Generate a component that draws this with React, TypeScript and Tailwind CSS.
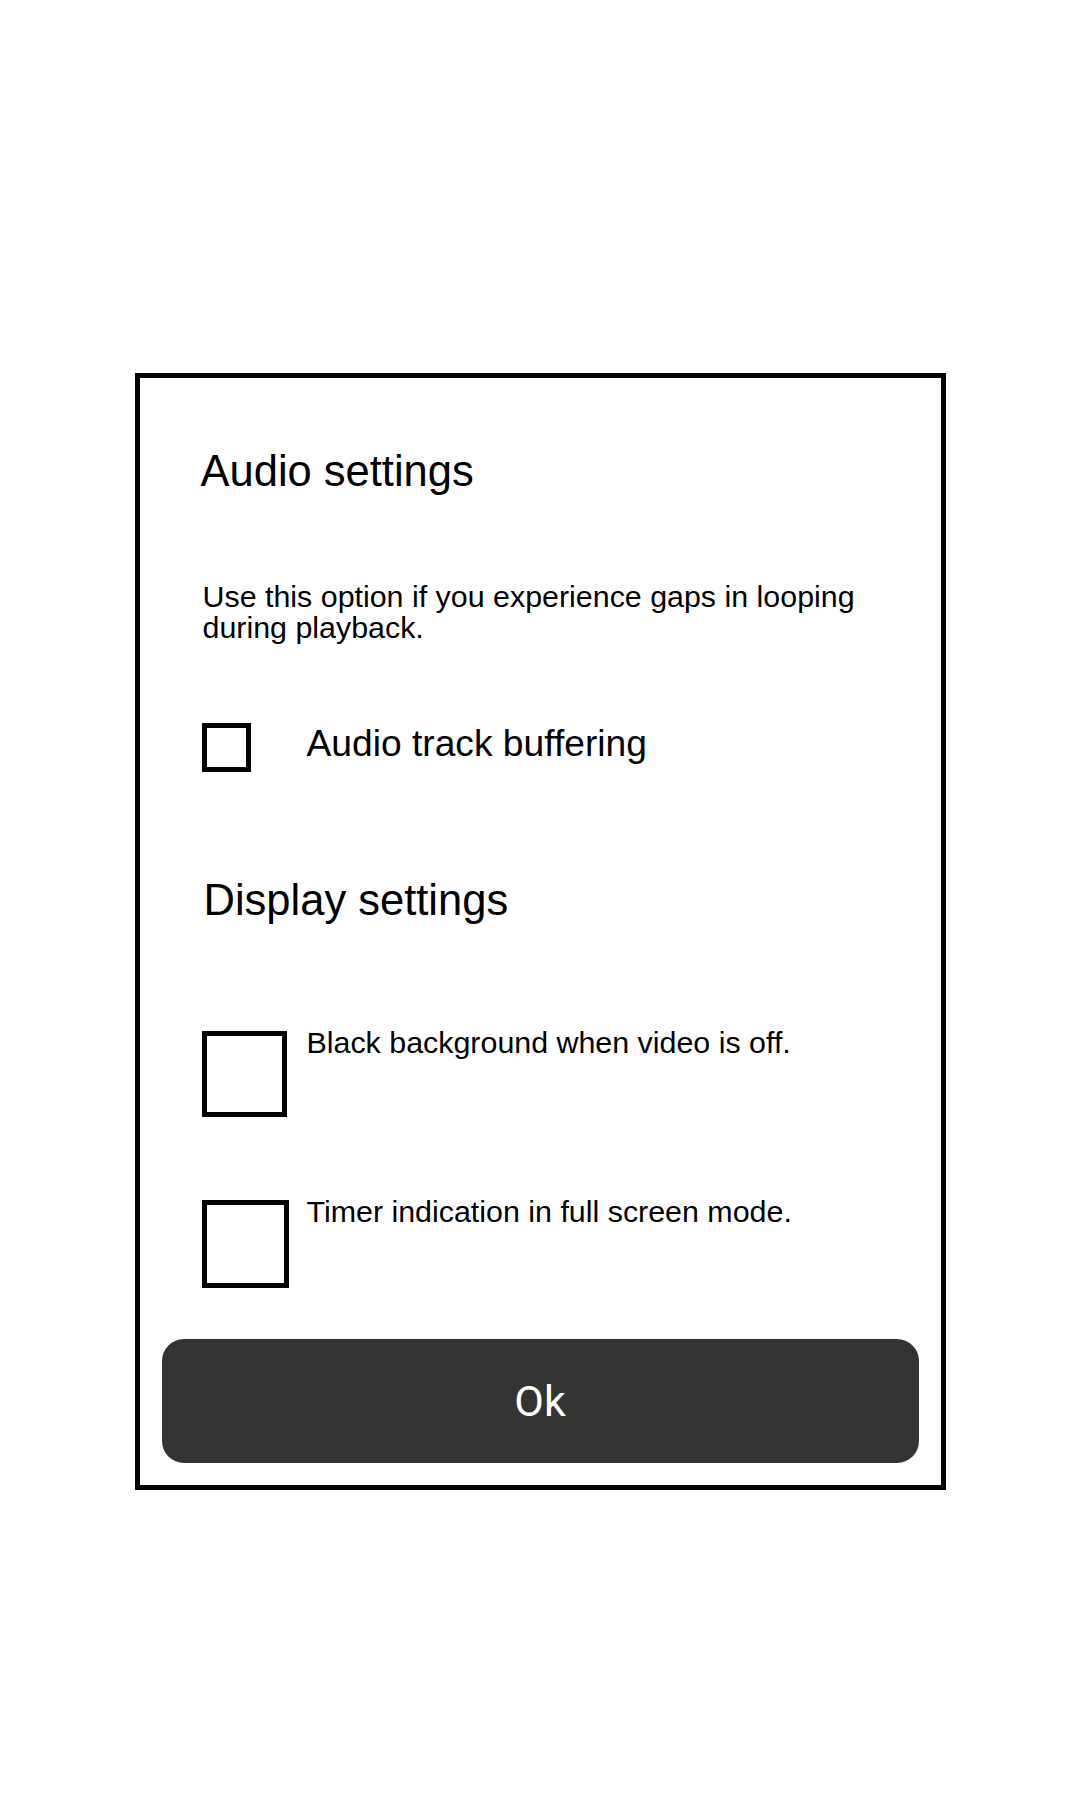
import React from "react";

export default function App() {
  return (
    <div className="min-h-[1800px] w-[1080px] bg-white pt-[373px] font-['Liberation_Sans',Arial,sans-serif] text-black">
      <div className="mx-auto flex h-[1117px] w-[811px] flex-col border-[5px] border-black bg-white">
        <div className="flex flex-1 flex-col pl-[61px] pt-[72px]">
          <h2 className="text-[43.5px] leading-[43px] font-normal">Audio settings</h2>
          <p className="mt-[88px] ml-[2px] w-[700px] text-[30.4px] leading-[31px]">
            Use this option if you experience gaps in looping during playback.
          </p>
          <div className="mt-[80px] flex items-center">
            <div className="w-[106px]">
              <div className="ml-px h-[49px] w-[49px] border-[5px] border-black" />
            </div>
            <span className="-mt-[8px] text-[37.2px] leading-[43px]">Audio track buffering</span>
          </div>
          <h2 className="mt-[107px] ml-[3px] text-[43.5px] leading-[43px] font-normal">Display settings</h2>
          <div className="mt-[109px] flex items-start">
            <div className="w-[106px]">
              <div className="ml-px h-[86px] w-[85px] border-[5px] border-black" />
            </div>
            <span className="-mt-[6px] text-[30.4px] leading-[34px]">Black background when video is off.</span>
          </div>
          <div className="mt-[83px] flex items-start">
            <div className="w-[106px]">
              <div className="ml-px h-[88px] w-[87px] border-[5px] border-black" />
            </div>
            <span className="-mt-[6px] text-[30.4px] leading-[34px]">Timer indication in full screen mode.</span>
          </div>
        </div>
        <div className="px-[22px] pb-[22px]">
          <button className="flex h-[124px] w-full items-center justify-center rounded-[22px] bg-[#333333] font-['Roboto',sans-serif] text-[43px] text-white">
            Ok
          </button>
        </div>
      </div>
    </div>
  );
}
